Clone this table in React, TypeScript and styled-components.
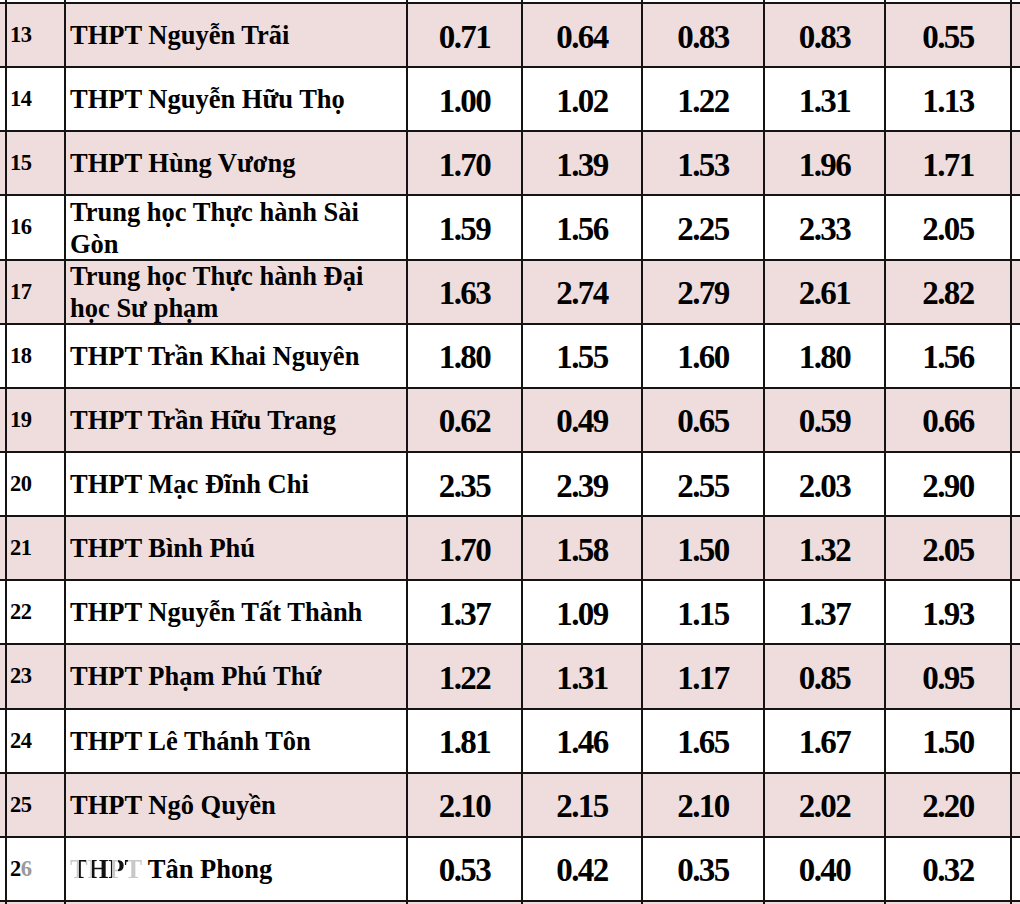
import React from "react";
import styled, { createGlobalStyle } from "styled-components";

const Global = createGlobalStyle`
  html, body { margin: 0; padding: 0; background: #ffffff; }
  body { font-family: "Liberation Serif", "Times New Roman", serif; }
`;

const PINK = "#efdddd";
const LINE = "#141414";

const Grid = styled.div`
  display: grid;
  width: 1020px;
  height: 904px;
  overflow: hidden;
  grid-template-columns: 5px 57px 340px 113px 118px 120px 119px 124px 8px;
  grid-template-rows: 2px repeat(14, 62.15px) 2px;
  column-gap: 2px;
  row-gap: 2px;
  background: ${LINE};
  color: #000;
  font-weight: 700;
`;

const Cell = styled.div<{ $pink: boolean }>`
  background: ${(p) => (p.$pink ? PINK : "#ffffff")};
  display: flex;
  align-items: center;
  overflow: hidden;
  min-width: 0;
`;

const IndexCell = styled(Cell)`
  padding-left: 3px;
  font-size: 22.5px;
  letter-spacing: -0.5px;
`;

const NameCell = styled(Cell)`
  padding: 0 8px 0 4px;
  font-size: 26.5px;
  line-height: 32px;
  letter-spacing: 0;
`;

const NumCell = styled(Cell)`
  justify-content: center;
  padding-top: 4px;
  font-size: 33px;
  letter-spacing: -1.6px;
`;

const Faded = styled.span`
  background: linear-gradient(
    90deg,
    #c8c8c8 0%,
    #c8c8c8 12%,
    #111 12%,
    #111 22%,
    #c8c8c8 22%,
    #c8c8c8 30%,
    #111 30%,
    #111 58%,
    #c8c8c8 58%,
    #c8c8c8 66%,
    #111 66%,
    #111 80%,
    #c8c8c8 80%,
    #c8c8c8 100%
  );
  -webkit-background-clip: text;
  background-clip: text;
  color: transparent;
`;

const Light = styled.span`
  color: #9a9a9a;
`;

type Row = { id: string; name: React.ReactNode; vals: string[] };

const rows: Row[] = [
  { id: "13", name: "THPT Nguyễn Trãi", vals: ["0.71", "0.64", "0.83", "0.83", "0.55"] },
  { id: "14", name: "THPT Nguyễn Hữu Thọ", vals: ["1.00", "1.02", "1.22", "1.31", "1.13"] },
  { id: "15", name: "THPT Hùng Vương", vals: ["1.70", "1.39", "1.53", "1.96", "1.71"] },
  { id: "16", name: "Trung học Thực hành Sài Gòn", vals: ["1.59", "1.56", "2.25", "2.33", "2.05"] },
  { id: "17", name: "Trung học Thực hành Đại học Sư phạm", vals: ["1.63", "2.74", "2.79", "2.61", "2.82"] },
  { id: "18", name: "THPT Trần Khai Nguyên", vals: ["1.80", "1.55", "1.60", "1.80", "1.56"] },
  { id: "19", name: "THPT Trần Hữu Trang", vals: ["0.62", "0.49", "0.65", "0.59", "0.66"] },
  { id: "20", name: "THPT Mạc Đĩnh Chi", vals: ["2.35", "2.39", "2.55", "2.03", "2.90"] },
  { id: "21", name: "THPT Bình Phú", vals: ["1.70", "1.58", "1.50", "1.32", "2.05"] },
  { id: "22", name: "THPT Nguyễn Tất Thành", vals: ["1.37", "1.09", "1.15", "1.37", "1.93"] },
  { id: "23", name: "THPT Phạm Phú Thứ", vals: ["1.22", "1.31", "1.17", "0.85", "0.95"] },
  { id: "24", name: "THPT Lê Thánh Tôn", vals: ["1.81", "1.46", "1.65", "1.67", "1.50"] },
  { id: "25", name: "THPT Ngô Quyền", vals: ["2.10", "2.15", "2.10", "2.02", "2.20"] },
  {
    id: "26",
    name: (
      <>
        <Faded>THPT</Faded> Tân Phong
      </>
    ),
    vals: ["0.53", "0.42", "0.35", "0.40", "0.32"],
  },
];

function Strip({ pink }: { pink: boolean }) {
  return (
    <>
      {Array.from({ length: 9 }).map((_, i) => (
        <Cell key={i} $pink={pink} />
      ))}
    </>
  );
}

export default function App() {
  return (
    <>
      <Global />
      <Grid>
        <Strip pink={false} />
        {rows.map((r, i) => {
          const pink = i % 2 === 0;
          return (
            <React.Fragment key={r.id}>
              <Cell $pink={pink} />
              <IndexCell $pink={pink}>
                {r.id === "26" ? (
                  <>
                    2<Light>6</Light>
                  </>
                ) : (
                  r.id
                )}
              </IndexCell>
              <NameCell $pink={pink}>
                <span>{r.name}</span>
              </NameCell>
              {r.vals.map((v, j) => (
                <NumCell key={j} $pink={pink}>
                  {v}
                </NumCell>
              ))}
              <Cell $pink={pink} />
            </React.Fragment>
          );
        })}
        <Strip pink={true} />
      </Grid>
    </>
  );
}
